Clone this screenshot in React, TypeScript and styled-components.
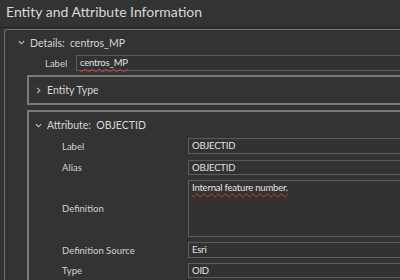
import styled, { createGlobalStyle } from 'styled-components'

const GlobalStyle = createGlobalStyle`
  html, body {
    margin: 0;
    padding: 0;
    background: #333333;
    overflow: hidden;
  }
  body {
    font-family: Lato, "Open Sans", sans-serif;
    color: #dcdcdc;
  }
`

const Page = styled.div`
  width: 400px;
  height: 280px;
  overflow: hidden;
  background: #333333;
`

const Title = styled.div`
  height: 28px;
  padding-left: 6px;
  font-size: 14px;
  line-height: 23px;
  color: #d8d8d8;
  border-bottom: 1px solid #222222;
  box-sizing: border-box;
  white-space: nowrap;
`

const OuterBox = styled.div`
  margin: 1px 0 0 4px;
  border: 1px solid #707070;
  border-right: none;
  border-bottom: none;
  border-top-left-radius: 3px;
  padding: 0 0 0 22px;
  height: 260px;
  box-sizing: border-box;
`

const Header = styled.div<{ $indent: number; $height: number }>`
  display: flex;
  align-items: center;
  gap: 5px;
  height: ${p => p.$height}px;
  margin-left: ${p => p.$indent}px;
  font-size: 10.5px;
  color: #d6d6d6;
  white-space: nowrap;
`

const Chevron = styled.svg`
  width: 7px;
  height: 7px;
  flex-shrink: 0;
`

const Row = styled.div<{ $labelWidth: number; $gap: number }>`
  display: grid;
  grid-template-columns: ${p => p.$labelWidth}px 1fr;
  align-items: center;
  margin-bottom: ${p => p.$gap}px;
`

const FieldLabel = styled.div<{ $pad?: number }>`
  padding-left: ${p => p.$pad ?? 0}px;
  font-size: 9.5px;
  color: #d2d2d2;
  white-space: nowrap;
`

const Field = styled.div<{ $height: number }>`
  height: ${p => p.$height}px;
  border: 1px solid #5c5c5c;
  border-right: none;
  box-sizing: border-box;
  padding: 0 4px 0 3px;
  font-size: 9.5px;
  letter-spacing: -0.2px;
  line-height: 14px;
  color: #e2e2e2;
  white-space: nowrap;
  background: #323232;
`

const Squiggle = styled.span`
  text-decoration: underline wavy #d23a3a;
  text-decoration-thickness: 1px;
  text-underline-offset: 2px;
`

const Section = styled.div<{ $height?: number }>`
  border: 2px solid #7a7a7a;
  border-right: none;
  height: ${p => p.$height ?? 200}px;
  box-sizing: border-box;
  margin-bottom: 5px;
`

const SectionBody = styled.div`
  padding-left: 33px;
`

const Down = () => (
  <Chevron viewBox="0 0 8 8">
    <path d="M1 2.5 L4 5.5 L7 2.5" fill="none" stroke="#c8c8c8" strokeWidth="1.2" />
  </Chevron>
)

const Right = () => (
  <Chevron viewBox="0 0 8 8">
    <path d="M2.5 1 L5.5 4 L2.5 7" fill="none" stroke="#c8c8c8" strokeWidth="1.2" />
  </Chevron>
)

const fields = [
  { label: 'Label', value: 'OBJECTID', height: 16, gap: 6 },
  { label: 'Alias', value: 'OBJECTID', height: 15, gap: 5 },
  { label: 'Definition', value: 'Internal feature number.', height: 57, gap: 5, spell: true },
  { label: 'Definition Source', value: 'Esri', height: 16, gap: 5 },
  { label: 'Type', value: 'OID', height: 15, gap: 5 },
]

export default function App() {
  return (
    <Page>
      <GlobalStyle />
      <Title>Entity and Attribute Information</Title>
      <OuterBox>
        <Header $indent={-9} $height={25}>
          <Down />
          <span>Details:&nbsp; centros_MP</span>
        </Header>
        <Row $labelWidth={49} $gap={4}>
          <FieldLabel $pad={18}>Label</FieldLabel>
          <Field $height={16}>
            <Squiggle>centros_MP</Squiggle>
          </Field>
        </Row>
        <Section $height={30}>
          <Header $indent={6} $height={26}>
            <Right />
            <span>Entity Type</span>
          </Header>
        </Section>
        <Section>
          <Header $indent={6} $height={26}>
            <Down />
            <span>Attribute:&nbsp; OBJECTID</span>
          </Header>
          <SectionBody>
            {fields.map(f => (
              <Row key={f.label} $labelWidth={126} $gap={f.gap}>
                <FieldLabel>{f.label}</FieldLabel>
                <Field $height={f.height}>
                  {f.spell ? <Squiggle>{f.value}</Squiggle> : f.value}
                </Field>
              </Row>
            ))}
          </SectionBody>
        </Section>
      </OuterBox>
    </Page>
  )
}
